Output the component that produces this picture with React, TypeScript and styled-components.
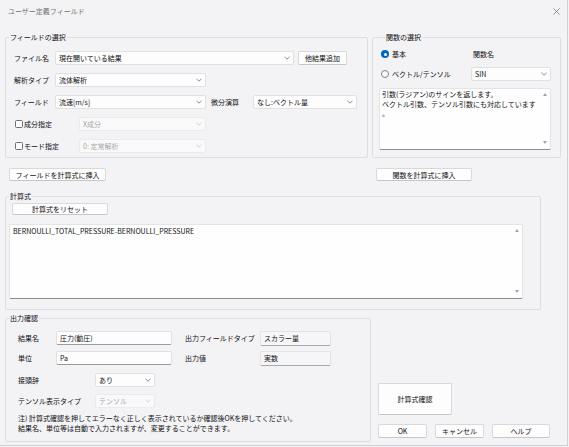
import React from 'react'
import styled, { createGlobalStyle } from 'styled-components'

const GlobalStyle = createGlobalStyle`
  *, *::before, *::after { box-sizing: border-box; }
  html, body { margin: 0; padding: 0; background: #f3f2f5; }
  body {
    font-family: "Noto Sans CJK JP", "Noto Sans", sans-serif;
    font-size: 7px;
    line-height: 10px;
    color: #111113;
  }
`

const Window = styled.div`
  width: 568px;
  height: 446px;
  background: #f3f2f5;
  border-right: 1px solid #c9d1da;
  border-bottom: 1px solid #c9d1da;
  display: flex;
  flex-direction: column;
  padding-left: 5px;
`

const TitleBar = styled.div`
  height: 22px;
  margin-left: -5px;
  display: flex;
  align-items: center;
  justify-content: space-between;
  padding: 0 7px 0 8px;
  color: #707070;
`

const TopRow = styled.div`
  display: flex;
  gap: 4px;
  margin-top: 10px;
`

const Group = styled.fieldset<{ $w: number; $h: number }>`
  margin: 0;
  padding: 0;
  min-width: 0;
  width: ${p => p.$w}px;
  height: ${p => p.$h}px;
  flex: none;
  border: 1px solid #deddE2;
  border-radius: 2px;
`

const Legend = styled.legend<{ $ml: number }>`
  margin-left: ${p => p.$ml}px;
  padding: 0 1px;
  height: 10px;
  line-height: 10px;
`

const GroupBody = styled.div<{ $pad: string; $gap?: number }>`
  padding: ${p => p.$pad};
  display: flex;
  flex-direction: column;
  gap: ${p => p.$gap ?? 0}px;
`

const Row = styled.div<{ $mt?: number }>`
  display: flex;
  align-items: center;
  height: 14px;
  margin-top: ${p => p.$mt ?? 0}px;
`

const Label = styled.span<{ $w?: number; $ml?: number }>`
  flex: none;
  width: ${p => (p.$w ? `${p.$w}px` : 'auto')};
  margin-left: ${p => p.$ml ?? 0}px;
  white-space: nowrap;
`

const Combo = styled.div<{ $w: number; $disabled?: boolean }>`
  flex: none;
  width: ${p => p.$w}px;
  height: 14px;
  display: flex;
  align-items: center;
  justify-content: space-between;
  padding: 0 3px 0 3px;
  background: ${p => (p.$disabled ? '#f9f9fa' : '#fdfdfd')};
  border: 1px solid ${p => (p.$disabled ? '#ebebee' : '#e1e1e4')};
  border-radius: 2px;
  color: ${p => (p.$disabled ? '#a8a8a8' : '#111113')};
  white-space: nowrap;
`

const Button = styled.div<{ $w: number; $h?: number; $ml?: number }>`
  flex: none;
  width: ${p => p.$w}px;
  height: ${p => p.$h ?? 14}px;
  margin-left: ${p => p.$ml ?? 0}px;
  display: flex;
  align-items: center;
  justify-content: center;
  background: #fdfdfd;
  border: 1px solid #d9d9dc;
  border-bottom-color: #c6c6c9;
  border-radius: 2px;
  white-space: nowrap;
`

const Check = styled.span`
  flex: none;
  width: 8px;
  height: 8px;
  margin: 0 1px 0 1px;
  border: 1px solid #6f6f72;
  border-radius: 1.5px;
  background: #fbfbfb;
`

const CheckLabel = styled.label<{ $w: number }>`
  flex: none;
  width: ${p => p.$w}px;
  display: flex;
  align-items: center;
`

const Radio = styled.span<{ $on?: boolean }>`
  flex: none;
  width: 8px;
  height: 8px;
  margin: 0 3px 0 2px;
  border-radius: 50%;
  background: ${p => (p.$on ? '#0067c0' : '#f8f8f8')};
  border: ${p => (p.$on ? 'none' : '1px solid #858589')};
  display: flex;
  align-items: center;
  justify-content: center;
  &::after {
    content: '';
    display: ${p => (p.$on ? 'block' : 'none')};
    width: 3px;
    height: 3px;
    border-radius: 50%;
    background: #fff;
  }
`

const FuncGrid = styled.div`
  display: grid;
  grid-template-columns: 92px 80px;
  grid-template-rows: 14px 14px 62px;
  row-gap: 6px;
  align-items: center;
`

const RadioLabel = styled.label`
  display: flex;
  align-items: center;
`

const ColText = styled.span`
  padding-left: 2px;
`

const TextBox = styled.div<{ $w: number; $h: number; $span?: boolean; $mt?: number }>`
  width: ${p => p.$w}px;
  height: ${p => p.$h}px;
  margin-top: ${p => p.$mt ?? 0}px;
  grid-column: ${p => (p.$span ? '1 / span 2' : 'auto')};
  align-self: start;
  display: flex;
  background: #fdfefd;
  border: 1px solid #e4e4e6;
  border-bottom-color: #8d8d90;
  border-radius: 2px;
`

const TextContent = styled.div<{ $pad?: string }>`
  flex: 1;
  padding: ${p => p.$pad ?? '1px 2px'};
  line-height: 9.5px;
  white-space: pre;
  overflow: hidden;
`

const Scroll = styled.div`
  flex: none;
  width: 11px;
  display: flex;
  flex-direction: column;
  align-items: center;
  justify-content: space-between;
  padding: 4px 0 5px;
`

const Tri = styled.span<{ $down?: boolean }>`
  width: 0;
  height: 0;
  border-left: 2.5px solid transparent;
  border-right: 2.5px solid transparent;
  ${p => (p.$down ? 'border-top: 3px solid #a4a4a7;' : 'border-bottom: 3px solid #a4a4a7;')}
`

const ButtonRow = styled.div`
  display: grid;
  grid-template-columns: 363px 189px;
  column-gap: 4px;
  margin-top: 10px;
`

const Spaced = styled.div<{ $mt: number }>`
  margin-top: ${p => p.$mt}px;
`

const BottomRow = styled.div`
  display: flex;
  margin-top: 3px;
`

const Field = styled.div<{ $w: number; $ro?: boolean }>`
  flex: none;
  width: ${p => p.$w}px;
  height: ${p => (p.$ro ? 15 : 14)}px;
  display: flex;
  align-items: center;
  padding: 0 3px;
  background: ${p => (p.$ro ? '#f6f6f8' : '#fdfdfd')};
  border: 1px solid ${p => (p.$ro ? '#e3e3e6' : '#e1e1e4')};
  border-bottom-color: ${p => (p.$ro ? '#a9a9ad' : '#9a9a9e')};
  border-radius: 2px;
  white-space: nowrap;
`

const Note = styled.div`
  margin-top: 5px;
  line-height: 10px;
  white-space: nowrap;
`

const RightCol = styled.div`
  margin-left: 7px;
  display: flex;
  flex-direction: column;
  justify-content: flex-end;
  padding-bottom: 4px;
  gap: 9px;
`

const BtnGroup = styled.div`
  display: flex;
  gap: 8px;
`

const Chevron = ({ off }: { off?: boolean }) => (
  <svg width="6" height="4" viewBox="0 0 6 4">
    <polyline points="0.5,0.8 3,3.2 5.5,0.8" fill="none" stroke={off ? '#c6c6c9' : '#747477'} strokeWidth="0.8" />
  </svg>
)

const Select = ({ w, value, off }: { w: number; value: string; off?: boolean }) => (
  <Combo $w={w} $disabled={off}>
    <span>{value}</span>
    <Chevron off={off} />
  </Combo>
)

const CloseIcon = () => (
  <svg width="7" height="7" viewBox="0 0 7 7">
    <path d="M0.5 0.5 L6.5 6.5 M6.5 0.5 L0.5 6.5" stroke="#777" strokeWidth="0.8" />
  </svg>
)

export default function App() {
  return (
    <>
      <GlobalStyle />
      <Window>
        <TitleBar>
          <span>ユーザー定義フィールド</span>
          <CloseIcon />
        </TitleBar>

        <TopRow>
          <Group $w={363} $h={126}>
            <Legend $ml={3}>フィールドの選択</Legend>
            <GroupBody $pad="9px 0 0 8px" $gap={8}>
              <Row>
                <Label $w={41}>ファイル名</Label>
                <Select w={239} value="現在開いている結果" />
                <Button $w={49} $ml={4}>他結果追加</Button>
              </Row>
              <Row>
                <Label $w={41}>解析タイプ</Label>
                <Select w={151} value="流体解析" />
              </Row>
              <Row>
                <Label $w={41}>フィールド</Label>
                <Select w={151} value="流速[m/s]" />
                <Label $w={42} $ml={5}>微分演算</Label>
                <Select w={104} value="なし:ベクトル量" />
              </Row>
              <Row>
                <CheckLabel $w={65}>
                  <Check />
                  成分指定
                </CheckLabel>
                <Select w={127} value="X成分" off />
              </Row>
              <Row>
                <CheckLabel $w={65}>
                  <Check />
                  モード指定
                </CheckLabel>
                <Select w={127} value="0: 定常解析" off />
              </Row>
            </GroupBody>
          </Group>

          <Group $w={189} $h={126}>
            <Legend $ml={12}>関数の選択</Legend>
            <GroupBody $pad="5px 0 0 6px">
              <FuncGrid>
                <RadioLabel>
                  <Radio $on />
                  基本
                </RadioLabel>
                <ColText>関数名</ColText>
                <RadioLabel>
                  <Radio />
                  ベクトル/テンソル
                </RadioLabel>
                <Select w={80} value="SIN" />
                <TextBox $w={172} $h={62} $span $mt={1}>
                  <TextContent>
                    {'引数(ラジアン)のサインを返します。\nベクトル引数、テンソル引数にも対応しています\n。'}
                  </TextContent>
                  <Scroll>
                    <Tri />
                    <Tri $down />
                  </Scroll>
                </TextBox>
              </FuncGrid>
            </GroupBody>
          </Group>
        </TopRow>

        <ButtonRow>
          <Button $w={97} $h={13} $ml={4}>フィールドを計算式に挿入</Button>
          <Button $w={96} $h={13} $ml={4}>関数を計算式に挿入</Button>
        </ButtonRow>

        <Spaced $mt={10}>
          <Group $w={536} $h={119}>
            <Legend $ml={3}>計算式</Legend>
            <GroupBody $pad="2px 0 0 3px" $gap={9}>
              <Button $w={96} $h={12} $ml={3}>計算式をリセット</Button>
              <TextBox $w={514} $h={75}>
                <TextContent $pad="2px 3px">BERNOULLI_TOTAL_PRESSURE-BERNOULLI_PRESSURE</TextContent>
                <Scroll>
                  <Tri />
                  <Tri $down />
                </Scroll>
              </TextBox>
            </GroupBody>
          </Group>
        </Spaced>

        <BottomRow>
          <Group $w={366} $h={129}>
            <Legend $ml={3}>出力確認</Legend>
            <GroupBody $pad="8px 0 0 12px">
              <Row>
                <Label $w={38}>結果名</Label>
                <Field $w={116}>圧力(動圧)</Field>
                <Label $w={75} $ml={13}>出力フィールドタイプ</Label>
                <Field $w={71} $ro>スカラー量</Field>
              </Row>
              <Row $mt={6}>
                <Label $w={38}>単位</Label>
                <Field $w={116}>Pa</Field>
                <Label $w={75} $ml={13}>出力値</Label>
                <Field $w={71} $ro>実数</Field>
              </Row>
              <Row $mt={8}>
                <Label $w={77}>接頭辞</Label>
                <Select w={60} value="あり" />
              </Row>
              <Row $mt={7}>
                <Label $w={77}>テンソル表示タイプ</Label>
                <Select w={60} value="テンソル" off />
              </Row>
              <Note>
                注) 計算式確認を押してエラーなく正しく表示されているか確認後OKを押してください。
                <br />
                結果名、単位等は自動で入力されますが、変更することができます。
              </Note>
            </GroupBody>
          </Group>

          <RightCol>
            <Button $w={74} $h={32}>計算式確認</Button>
            <BtnGroup>
              <Button $w={49}>OK</Button>
              <Button $w={49}>キャンセル</Button>
              <Button $w={58}>ヘルプ</Button>
            </BtnGroup>
          </RightCol>
        </BottomRow>
      </Window>
    </>
  )
}
